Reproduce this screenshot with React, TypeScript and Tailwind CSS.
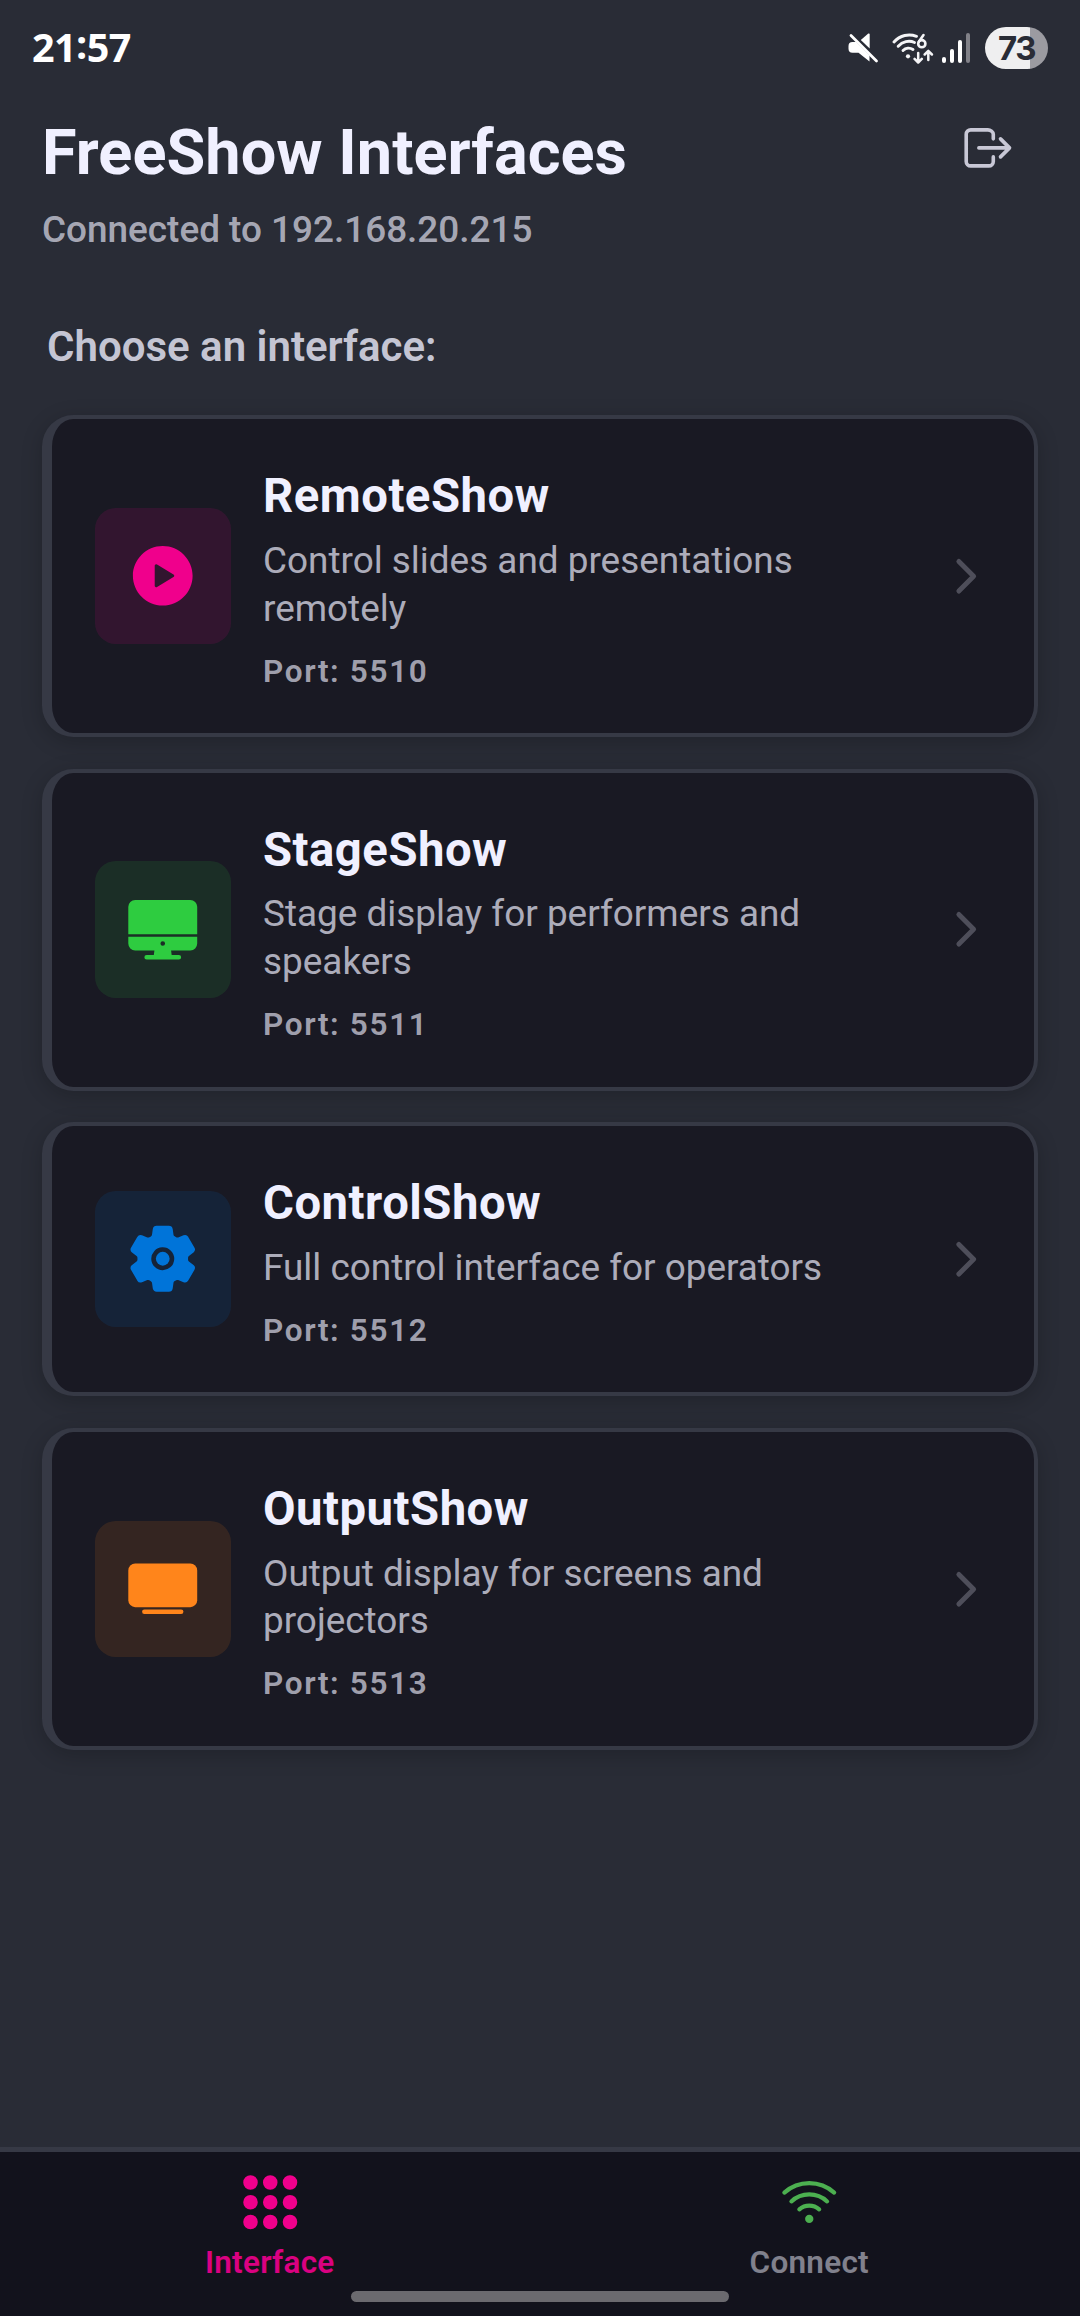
import type { ReactNode } from "react";
import {
  IoApps,
  IoChevronForward,
  IoDesktop,
  IoLogOutOutline,
  IoPlayCircle,
  IoSettings,
  IoTv,
  IoWifiOutline,
} from "react-icons/io5";

type Item = {
  name: string;
  lines: string[];
  port: number;
  tile: string;
  icon: ReactNode;
};

const items: Item[] = [
  {
    name: "RemoteShow",
    lines: ["Control slides and presentations", "remotely"],
    port: 5510,
    tile: "bg-[#F0008C]/12 text-[#F0008C]",
    icon: <IoPlayCircle size={73.5} />,
  },
  {
    name: "StageShow",
    lines: ["Stage display for performers and", "speakers"],
    port: 5511,
    tile: "bg-[#2ECC40]/12 text-[#2ECC40]",
    icon: <IoDesktop size={73.5} />,
  },
  {
    name: "ControlShow",
    lines: ["Full control interface for operators"],
    port: 5512,
    tile: "bg-[#0074D9]/12 text-[#0074D9]",
    icon: <IoSettings size={73.5} />,
  },
  {
    name: "OutputShow",
    lines: ["Output display for screens and", "projectors"],
    port: 5513,
    tile: "bg-[#FF851B]/12 text-[#FF851B]",
    icon: <IoTv size={73.5} />,
  },
];

function MutedIcon() {
  return (
    <svg width="32" height="32" viewBox="0 0 32 32" fill="none">
      <path d="M0.500 14a4 4 0 0 1 4-4H8L21.500 23.500V29.500L10.500 20.800H4.500a4 4 0 0 1-4-4z" fill="#fff" />
      <path d="M12.800 8L20 1.800c.8-.6 1.700-.2 1.700.8V16.500z" fill="#fff" />
      <path d="M3 3.500L28.500 29" stroke="#fff" strokeWidth="2.800" strokeLinecap="round" />
    </svg>
  );
}

function StatusWifi() {
  return (
    <svg width="42" height="32" viewBox="0 0 42 32" fill="none" stroke="#f4f4f6" strokeLinecap="round">
      <path d="M2 10C8 3 17 1.500 24.500 4.300" strokeWidth="2.900" />
      <path d="M6.200 14.300C10.500 9.500 17 8 22.500 10.500" strokeWidth="2.900" />
      <path d="M11 18.500c2.800-2.800 6.800-3.200 10-1" strokeWidth="2.900" />
      <circle cx="16" cy="24.300" r="2.100" fill="#f4f4f6" stroke="none" />
      <path d="M31.500 3L27 9.500" strokeWidth="2.600" />
      <circle cx="29.800" cy="11.700" r="3.600" strokeWidth="2.600" />
      <path d="M26.200 21v9.300M22.600 26.900l3.600 3.600 3.600-3.600M36.300 28V19M32.700 22.500l3.600-3.600 3.600 3.600" strokeWidth="2.500" strokeLinejoin="round" />
    </svg>
  );
}

function SignalBars() {
  return (
    <div className="flex h-[30px] w-[28px] items-end justify-between">
      <div className="h-[6px] w-[4px] rounded-full bg-white" />
      <div className="h-[14px] w-[4px] rounded-full bg-white" />
      <div className="h-[23px] w-[4px] rounded-full bg-white" />
      <div className="h-[30px] w-[4px] rounded-full bg-[#818188]" />
    </div>
  );
}

function StatusBar() {
  return (
    <div className="flex h-[96px] items-center justify-between pr-[32px] pl-[32px]">
      <span className="pb-[1px] font-['Open_Sans'] text-[39.5px] leading-none font-bold tracking-[-0.6px] text-white">
        21<span className="relative bottom-[3px]">:</span>57
      </span>
      <div className="flex items-center">
        <MutedIcon />
        <div className="ml-[12px]">
          <StatusWifi />
        </div>
        <div className="ml-[8px]">
          <SignalBars />
        </div>
        <div className="ml-[15px] flex h-[42px] w-[63px] items-center justify-center rounded-full bg-linear-to-r from-[#efeff0] from-72% to-[#9b9ba1] to-72%">
          <span className="font-[Inter] text-[33px] leading-none font-bold tracking-[-1.5px] text-[#292c36]">73</span>
        </div>
      </div>
    </div>
  );
}

function Card({ item }: { item: Item }) {
  return (
    <button className="flex w-full items-center rounded-[31.5px] border-4 border-l-[10.5px] border-[#363945] bg-[#191923] py-[45px] pr-[42px] pl-[42.5px] text-left shadow-[0_5px_21px_rgba(0,0,0,0.2)]">
      <div className={`flex size-[136.5px] shrink-0 items-center justify-center rounded-[21px] ${item.tile}`}>{item.icon}</div>
      <div className="ml-[32px] flex-1">
        <h2 className="text-[47.25px] leading-[65px] font-bold tracking-[0.5px] text-[#F0F0FF]">{item.name}</h2>
        <p className="mt-[7.75px] text-[36.9px] leading-[47.75px] text-[#F0F0FF]/70">
          {item.lines.map((line) => (
            <span key={line} className="block whitespace-nowrap">
              {line}
            </span>
          ))}
        </p>
        <p className="mt-[23.25px] text-[31.5px] leading-[32.5px] font-semibold tracking-[1.65px] text-[#F0F0FF]/65">Port: {item.port}</p>
      </div>
      <IoChevronForward className="text-[#F0F0FF]/25" size={52.5} />
    </button>
  );
}

export default function App() {
  return (
    <div className="flex h-[2316px] w-[1080px] flex-col overflow-hidden bg-[#292c36] font-[Roboto,sans-serif]">
      <StatusBar />
      <header className="flex items-start justify-between pr-[63px] pl-[42px]">
        <div>
          <h1 className="mt-[20px] text-[63px] leading-[74px] font-bold tracking-[0.05px] text-[#F0F0FF]">FreeShow Interfaces</h1>
          <p className="mt-[18px] text-[36.9px] leading-[43px] font-medium text-[#F0F0FF]/65">Connected to 192.168.20.215</p>
        </div>
        <button aria-label="Disconnect" className="mt-[23px] text-[#F0F0FF]/80">
          <IoLogOutOutline size={57.75} />
        </button>
      </header>
      <main className="flex-1 px-[42px]">
        <h3 className="mt-[70.5px] pl-[5px] text-[42px] leading-[50px] font-semibold text-[#F0F0FF]/80">Choose an interface:</h3>
        <div className="mt-[43.5px] flex flex-col gap-[31.5px]">
          {items.map((item) => (
            <Card key={item.port} item={item} />
          ))}
        </div>
      </main>
      <nav className="relative flex h-[169px] border-t-5 border-[#363945] bg-[#12121c] pr-[1px]">
        <button className="flex flex-1 flex-col items-center pt-[17px] text-[#F0008C]">
          <IoApps size={66.5} />
          <span className="mt-[8px] text-[31.5px] leading-[38px] font-semibold tracking-[0.25px] opacity-90">Interface</span>
        </button>
        <button className="flex flex-1 flex-col items-center pt-[17px]">
          <IoWifiOutline className="text-[#4CAF50]" size={66.5} />
          <span className="mt-[8px] text-[31.5px] leading-[38px] font-semibold tracking-[0.25px] text-[#F0F0FF]/50">Connect</span>
        </button>
        <div className="absolute bottom-[14px] left-[351px] h-[11px] w-[378px] rounded-full bg-[#6b6a6f]" />
      </nav>
    </div>
  );
}
